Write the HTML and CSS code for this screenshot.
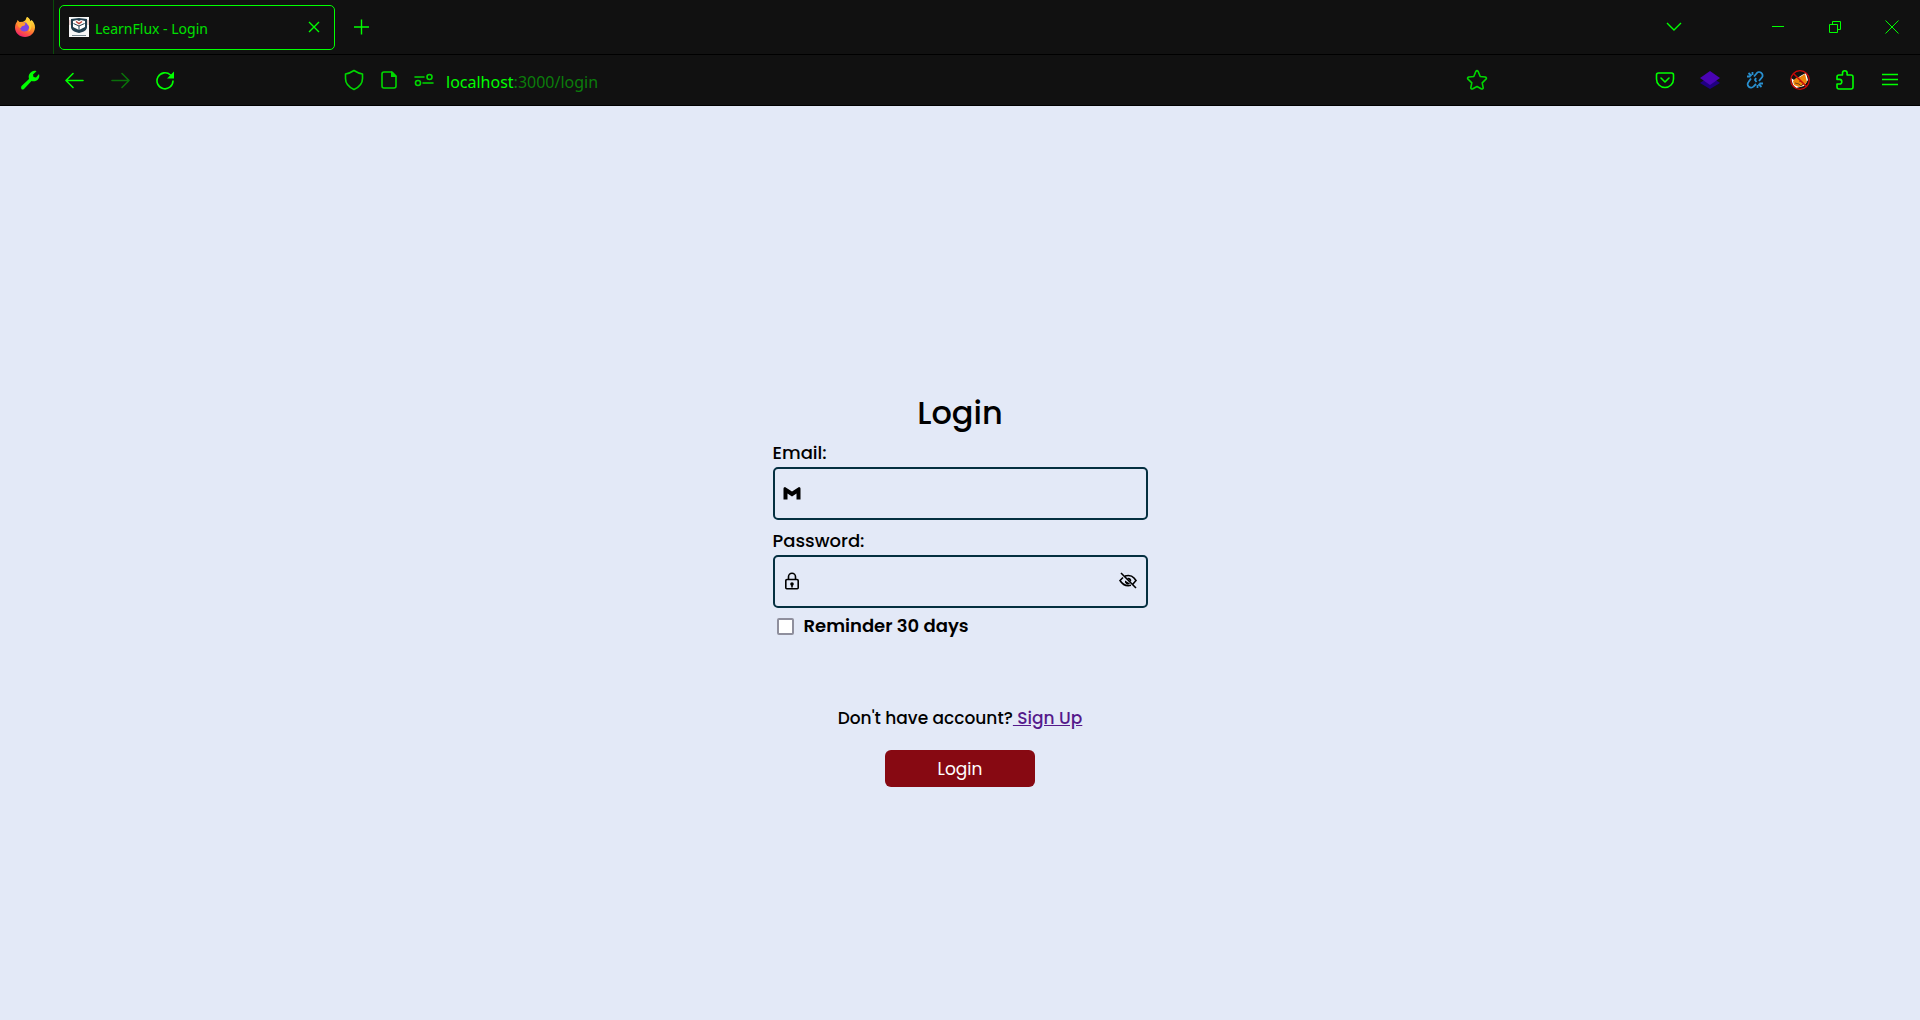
FILE: index.html
```html
<!DOCTYPE html>
<html lang="en">
<head>
<meta charset="utf-8">
<title>LearnFlux - Login</title>
<link rel="stylesheet" href="styles.css">
</head>
<body>
<header class="browser">
  <div class="tabstrip">
    <div class="firefox">
      <svg width="20" height="20" viewBox="0 0 20 20">
        <defs>
          <linearGradient id="flame" x1=".8" y1="0" x2=".3" y2="1"><stop offset="0" stop-color="#fff04a"/><stop offset=".35" stop-color="#ffb52c"/><stop offset=".65" stop-color="#ff6a35"/><stop offset="1" stop-color="#f01d70"/></linearGradient>
        </defs>
        <path fill="url(#flame)" d="M12 0c2 1 3 2.500 3.300 4.200L16.500 3C18.800 5 20 7.500 20 10.500 19.700 16 15.500 20 10 20S0 16 0 10.500C0 8 1 6 2 4.800L2.500 3l2 2L8 4.800l2.500-1.600Z"/>
        <circle cx="9.500" cy="10" r="4.600" fill="#7a45e5"/>
        <path fill="#ff9b2e" d="M2.500 6.500 8 5.200l2.500 1.300-1 2-2.500.7-1.500 2c-2-.7-3-2.500-3-4.700Z"/>
        <path fill="#ffce38" d="M10.500 3.200 12 0c2 1.500 4.500 4.500 4.500 8.500 0 3-1 5-3 6 1.500-3 1-6-1.500-7.500Z"/>
      </svg>
    </div>
    <div class="tab">
      <svg width="20" height="20" viewBox="0 0 20 20">
        <path fill="#f7f7f7" d="M0 0h20v20H0z"/>
        <path fill="#203d4d" d="m2 2 8-1 8 1v8c0 3-3 5-8 6-5-1-8-3-8-6Z"/>
        <path fill="#fff" d="m4 4 4-1 2 1 2-1 4 1v6l-6 3-6-3Z"/>
        <path d="M4.500 6.500 10 9l5.500-2.500M10 9v4" fill="none" stroke="#203d4d" stroke-width="1"/>
        <path d="m7 4.500 3 2 3-2" fill="none" stroke="#c0453c" stroke-width="1.500"/>
        <path d="M1 3v5M19 3v5" fill="none" stroke="#d8a5a2"/>
        <path d="M3 18.500h14" stroke="#788990" stroke-width="1"/>
      </svg>
      <span class="tab-title">LearnFlux - Login</span>
      <button class="tab-close" aria-label="Close tab"><svg width="12" height="12" viewBox="0 0 12 12"><path class="line" d="m1 1 10 10M11 1 1 11"/></svg></button>
    </div>
    <button class="new-tab" aria-label="New tab"><svg width="16" height="16" viewBox="0 0 16 16"><path class="line" d="M7.500 .5v15M0 8h15"/></svg></button>
    <button class="all-tabs" aria-label="List all tabs"><svg width="16" height="10" viewBox="0 0 16 10"><path class="line" d="m1 1 7 7 7-7"/></svg></button>
    <div class="window-controls">
      <button aria-label="Minimize"><svg width="12" height="12" viewBox="0 0 12 12"><path class="thin" d="M0 5.500h12"/></svg></button>
      <button aria-label="Restore"><svg width="12" height="12" viewBox="0 0 12 12"><path class="thin" d="M.5 3.500h8v8h-8zM3.500 3.500v-3h8v8h-3"/></svg></button>
      <button aria-label="Close"><svg width="14" height="14" viewBox="0 0 14 14"><path class="thin" d="m.5.5 13 13M13.500.5l-13 13"/></svg></button>
    </div>
  </div>

  <div class="toolbar">
    <nav class="tools">
      <button aria-label="Developer tools"><svg width="20" height="20" viewBox="0 0 20 20"><path fill="#0f0" d="M1.500 16 9 9c-1-3 0-6 3-7.500 1.500-.8 3-.8 4.500-.3L13 4.500l.5 2.500 2.500.5 3-3.500c.7 2 .3 4-1 5.500-1.500 1.700-4 2.200-6.500 1.500l-7.500 8c-1 .8-2 .8-2.500.1s-.5-2 0-3.100Z"/></svg></button>
      <button aria-label="Back"><svg width="20" height="20" viewBox="0 0 20 20"><path class="icon" d="M18 10.500H1M8 3.500l-7 7 7 7"/></svg></button>
      <button class="faded" aria-label="Forward" disabled><svg width="20" height="20" viewBox="0 0 20 20"><path class="icon" d="M2 10.500h17m-7-7 7 7-7 7"/></svg></button>
      <button aria-label="Reload"><svg width="20" height="20" viewBox="0 0 20 20"><path class="icon" d="M15.500 5A8 8 0 1 0 18 11"/><path fill="#0f0" d="M19 1.500v7h-7Z"/></svg></button>
    </nav>
    <div class="address">
      <button aria-label="Tracking protection"><svg width="20" height="22" viewBox="0 0 20 22"><path class="icon" d="M10 1.500c-3 2-5.500 3-8.500 3.500V9.500c0 4.500 3 8.500 8.500 11 5.500-2.500 8.500-6.500 8.500-11V5C15.500 4.500 13 3.500 10 1.500Z"/></svg></button>
      <button aria-label="Page information"><svg width="16" height="20" viewBox="0 0 16 20"><path class="icon" d="M11 2H3Q1 2 1 4v12q0 2 2 2h10q2 0 2-2V6Z"/><path fill="#00d800" d="M10 1v6h6Z"/></svg></button>
      <button aria-label="Permissions"><svg width="20" height="16" viewBox="0 0 20 16"><path class="icon" d="M1 5h9M9 11h10"/><circle class="icon" cx="15.500" cy="5" r="2.500"/><circle class="icon" cx="4" cy="11" r="2.500"/></svg></button>
      <div class="url"><span class="host">localhost</span>:3000/login</div>
      <button aria-label="Bookmark this page"><svg width="22" height="22" viewBox="0 0 22 22"><path class="icon" d="M9.800 2.500Q11 .8 12.200 2.500l2 5 5 .5q2 .7.800 2.200l-3.800 3.600 1 5q-.2 1.700-2 1L11 17.500l-4.200 2.300q-1.800.7-2-1l1-5L2 10.200Q.8 8.700 2.800 8l5-.5Z"/></svg></button>
    </div>
    <div class="tools">
      <button aria-label="Save to Pocket"><svg width="20" height="20" viewBox="0 0 20 20"><path class="icon" d="M3.500 3h13Q18.500 3 18.500 5v4a8.500 8.500 0 0 1-17 0V5q0-2 2-2ZM6 8l4 4 4-4"/></svg></button>
      <button aria-label="Layers extension"><svg width="20" height="20" viewBox="0 0 20 20"><path fill="#200080" d="m10 6 10 7-10 6-10-6Z"/><path fill="#4a04b4" d="m10 1 10 7-10 7L0 8Z"/></svg></button>
      <button aria-label="Link extension"><svg width="20" height="20" viewBox="0 0 20 20"><path fill="none" stroke="#2990d0" stroke-width="1.800" d="m9 6.500 2.500-3a3.300 3.300 0 0 1 5.500 3.800L14 11M11 8l-1 2 1.500 2M6 8.500 3.500 12a3.300 3.300 0 0 0 5 4.500L11 14M2 6.500h3.500M3.500 3l3 3M7.500 2v3M14.500 13.500H18M13.500 14l3 3M12.500 15v3"/></svg></button>
      <button aria-label="Fox extension"><svg width="20" height="20" viewBox="0 0 20 20"><path fill="#fff" d="m1 8 3 2 8-5 4-2 2 7-4 6-8 2-3-3Z"/><path fill="#ec850b" d="m3 11 3-3 4-1 5-3 2 8-3 3-5 2-5-2Z"/><path d="m5 13 4 1 2 2 2-2M9 11l3 1" fill="none" stroke="#72431c"/><circle cx="10" cy="10" r="9.300" fill="none" stroke="#c90909" stroke-width="1.300"/><path d="m3.500 3.500 13 13" stroke="#c90909" stroke-width="1.500"/></svg></button>
      <button aria-label="Extensions"><svg width="20" height="22" viewBox="0 0 20 22"><path class="icon" d="M7.500 6V4a2.300 2.300 0 0 1 4.600 0v2H16q2 0 2 2v10q0 2-2 2H4q-2 0-2-2v-3h2.500a2.300 2.300 0 0 0 0-4.600H2V8q0-2 2-2Z"/></svg></button>
      <button aria-label="Menu"><svg width="16" height="20" viewBox="0 0 16 20"><path class="line" d="M0 4.500h16M0 9.500h16M0 14.500h16"/></svg></button>
    </div>
  </div>
</header>

<main class="page">
  <form class="login">
    <h1>Login</h1>
    <label class="label" for="email">Email:</label>
    <div class="field">
      <input id="email" type="email">
      <svg class="lead" width="20" height="20" viewBox="0 0 20 20"><path d="M1.500 5.500Q1.500 4 3 4l7 4.500L17 4q1.500 0 1.500 1.500v11h-4v-6L10 13.500l-4.500-3v6h-4Z"/></svg>
    </div>
    <label class="label" for="password">Password:</label>
    <div class="field">
      <input id="password" type="password">
      <svg class="lead" width="20" height="20" viewBox="0 0 20 20"><path class="ink" d="M5 8.500h10q1.200 0 1.200 1.200v7q0 1-1 1H4.800q-1 0-1-1v-7Q3.800 8.500 5 8.500Zm1.500 0V5.700a3.500 3.500 0 0 1 7 0v2.800M10 13v3.500"/><circle cx="10" cy="13" r="1.800"/></svg>
      <button class="reveal" type="button" aria-label="Show password"><svg width="20" height="20" viewBox="0 0 20 20"><path class="ink" d="m3 2 15 15M7 5q6-1.500 9 2l2 2.500-3 3.500M5 6.500 2 9.500q4 6.500 11 4.800"/><path d="M7 9.500a3 3 0 0 0 5 3ZM9 7a3 3 0 0 1 4 4Z"/></svg></button>
    </div>
    <div class="reminder">
      <input id="reminder" type="checkbox">
      <label for="reminder">Reminder 30 days</label>
    </div>
    <p class="signup">Don't have account?<a href="#signup"> Sign Up</a></p>
    <button class="submit" type="submit">Login</button>
  </form>
</main>
</body>
</html>
```
FILE: styles.css
```css
* { box-sizing: border-box; }

body {
  display: flex;
  flex-direction: column;
  min-height: 100vh;
  margin: 0;
  background: #e3e9f7;
  color: #000;
  font-family: Poppins, Inter, sans-serif;
}

button {
  display: flex;
  align-items: center;
  justify-content: center;
  padding: 0;
  border: 0;
  background: none;
  font: inherit;
}

svg { display: block; flex: none; }

.line, .icon, .thin { fill: none; stroke: #0f0; }
.line { stroke-width: 1.4; }
.icon { stroke-width: 1.6; stroke-linecap: round; stroke-linejoin: round; }
.thin { stroke-width: 1; }
.address .icon { stroke: #00d800; }
.faded { opacity: .4; }

.browser {
  background: #111;
  color: #00e000;
  font-family: "Segoe UI", "Noto Sans", sans-serif;
}

.tabstrip {
  display: flex;
  align-items: center;
  height: 55px;
  border-bottom: 1px solid #000;
}

.firefox {
  display: flex;
  align-items: center;
  align-self: stretch;
  width: 54px;
  padding-left: 15px;
  border-right: 1px solid #0a4a0a;
}

.tab {
  display: flex;
  align-items: center;
  gap: 6px;
  width: 276px;
  height: 45px;
  margin-left: 5px;
  padding: 0 14px 0 9px;
  border: 1px solid #0f0;
  border-radius: 5px;
  font-size: 14px;
}

.tab-title { padding-top: 2px; }
.tab-close { margin-left: auto; }
.new-tab { width: 54px; height: 45px; }
.all-tabs { width: 45px; height: 45px; margin-left: auto; }
.window-controls { display: flex; margin-left: 53px; }
.window-controls button { width: 57px; height: 45px; }

.toolbar {
  display: flex;
  align-items: center;
  height: 51px;
  padding: 0 8px 0 7px;
  border-bottom: 1px solid #000;
}

.tools { display: flex; }
.tools button { width: 45px; height: 45px; }

.address {
  display: flex;
  flex: 1;
  align-items: center;
  margin: 0 148px 0 149px;
}

.address button { width: 35px; height: 45px; }
.url { flex: 1; padding: 3px 0 0 5px; color: #0b7d0b; font-size: 16px; }
.host { color: #0f0; }

.page {
  display: flex;
  flex: 1;
  align-items: center;
  justify-content: center;
  padding-top: 50px;
}

.login {
  display: flex;
  flex-direction: column;
  width: 375px;
  font-weight: 500;
}

h1 {
  margin: 0 0 2px;
  font-size: 32px;
  font-weight: 500;
  line-height: 48px;
  text-align: center;
}

.label { font-size: 18px; line-height: 28px; }

.field { position: relative; margin-bottom: 7px; }

.field input {
  display: block;
  width: 100%;
  height: 53px;
  padding: 0 40px;
  border: 2px solid #042f40;
  border-radius: 5px;
  background: none;
  font: inherit;
}

.lead, .reveal { position: absolute; top: 16px; }
.lead { left: 9px; }
.reveal { right: 10px; }
.ink { fill: none; stroke: #000; stroke-width: 1.6; }

.reminder {
  display: flex;
  align-items: center;
  gap: 10px;
  padding-left: 4px;
  font-size: 18px;
  font-weight: 600;
  line-height: 22px;
}

.reminder input {
  appearance: none;
  width: 17px;
  height: 17px;
  margin: 0;
  border: 2px solid #8f8f9d;
  border-radius: 2px;
  background: #fff;
}

.reminder input:checked { background: #042f40; }

.signup {
  margin: 67px 0 18px;
  font-size: 17px;
  line-height: 28px;
  text-align: center;
}

.signup a { color: #551a8b; }

.submit {
  align-self: center;
  width: 150px;
  height: 37px;
  border-radius: 6px;
  background: #870912;
  color: #fff;
  font-size: 17px;
  font-weight: 400;
}
```
